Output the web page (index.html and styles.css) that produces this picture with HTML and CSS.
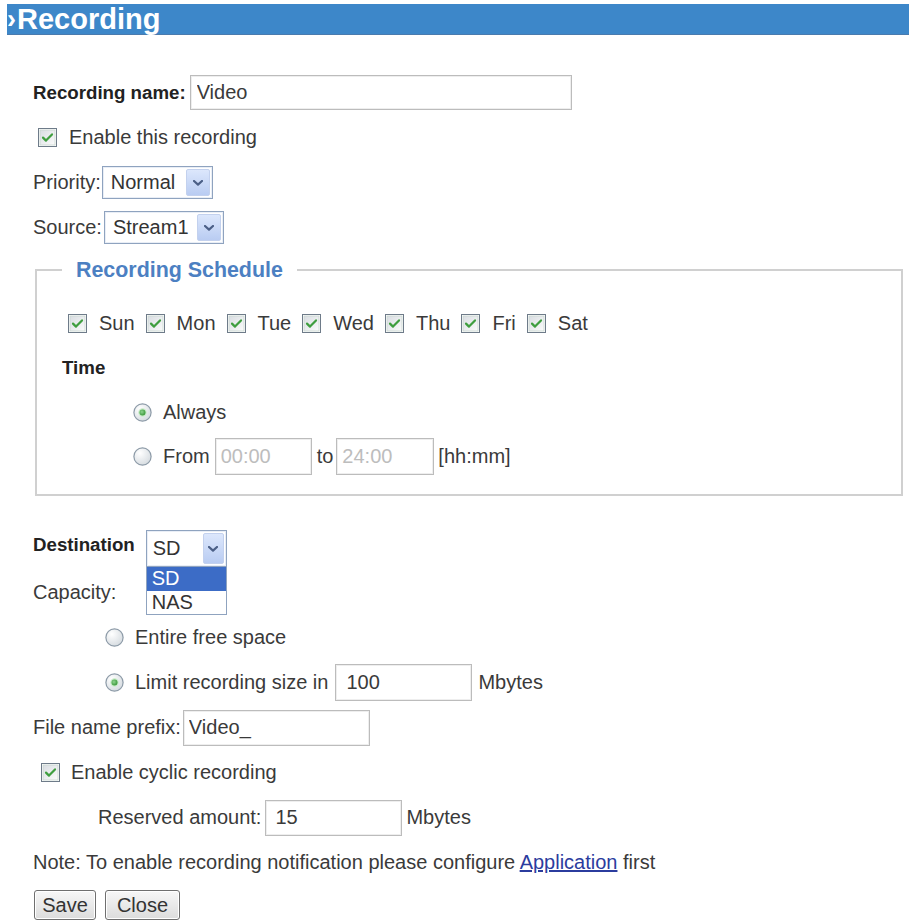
FILE: index.html
```html
<!DOCTYPE html>
<html lang="en">
<head>
<meta charset="utf-8">
<title>Recording</title>
<link rel="stylesheet" href="styles.css">
</head>
<body>
<div class="titlebar"><span class="arrow">›</span>Recording</div>

<div class="main">
  <div class="row">
    <span class="b">Recording name:</span>
    <input class="field name" type="text" value="Video">
  </div>

  <div class="row">
    <svg class="cb cb-main" viewBox="0 0 19 19"><use href="#chk"/></svg>
    <span>Enable this recording</span>
  </div>

  <div class="row">
    <span>Priority:</span>
    <div class="select sel-priority"><span class="val">Normal</span><span class="sbtn"><svg viewBox="0 0 10 6"><path d="M1 1 L5 4.6 L9 1"/></svg></span></div>
  </div>

  <div class="row">
    <span>Source:</span>
    <div class="select sel-source"><span class="val">Stream1</span><span class="sbtn"><svg viewBox="0 0 10 6"><path d="M1 1 L5 4.6 L9 1"/></svg></span></div>
  </div>

  <fieldset class="schedule">
    <legend>Recording Schedule</legend>
    <div class="row days">
      <svg class="cb cb-day" viewBox="0 0 19 19"><use href="#chk"/></svg><span class="day">Sun</span>
      <svg class="cb cb-day" viewBox="0 0 19 19"><use href="#chk"/></svg><span class="day">Mon</span>
      <svg class="cb cb-day" viewBox="0 0 19 19"><use href="#chk"/></svg><span class="day">Tue</span>
      <svg class="cb cb-day" viewBox="0 0 19 19"><use href="#chk"/></svg><span class="day">Wed</span>
      <svg class="cb cb-day" viewBox="0 0 19 19"><use href="#chk"/></svg><span class="day">Thu</span>
      <svg class="cb cb-day" viewBox="0 0 19 19"><use href="#chk"/></svg><span class="day">Fri</span>
      <svg class="cb cb-day" viewBox="0 0 19 19"><use href="#chk"/></svg><span class="day">Sat</span>
    </div>
    <div class="row"><span class="b">Time</span></div>
    <div class="row indent-time">
      <svg class="rd" viewBox="0 0 19 19"><use href="#rdon"/></svg><span>Always</span>
    </div>
    <div class="row indent-time">
      <svg class="rd" viewBox="0 0 19 19"><use href="#rdoff"/></svg><span>From</span>
      <input class="field time t-from" type="text" value="00:00" disabled>
      <span class="to">to</span>
      <input class="field time t-to" type="text" value="24:00" disabled>
      <span class="hhmm">[hh:mm]</span>
    </div>
  </fieldset>

  <div class="row dest">
    <span class="b">Destination</span>
    <div class="select sel-dest"><span class="val">SD</span><span class="sbtn"><svg viewBox="0 0 10 6"><path d="M1 1 L5 4.6 L9 1"/></svg></span>
      <ul class="options">
        <li class="hl">SD</li>
        <li>NAS</li>
      </ul>
    </div>
  </div>

  <div class="row capacity"><span>Capacity:</span></div>

  <div class="row indent-cap">
    <svg class="rd" viewBox="0 0 19 19"><use href="#rdoff"/></svg><span>Entire free space</span>
  </div>

  <div class="row indent-cap">
    <svg class="rd" viewBox="0 0 19 19"><use href="#rdon"/></svg><span>Limit recording size in</span>
    <input class="field size" type="text" value="100">
    <span class="unit">Mbytes</span>
  </div>

  <div class="row">
    <span>File name prefix:</span>
    <input class="field prefix" type="text" value="Video_">
  </div>

  <div class="row">
    <svg class="cb cb-cyclic" viewBox="0 0 19 19"><use href="#chk"/></svg>
    <span>Enable cyclic recording</span>
  </div>

  <div class="row indent-res">
    <span>Reserved amount:</span>
    <input class="field reserved" type="text" value="15">
    <span class="unit unit-res">Mbytes</span>
  </div>

  <div class="row">
    <span>Note: To enable recording notification please configure <a href="#" class="link">Application</a> first</span>
  </div>

  <div class="buttons">
    <button class="btn btn-save" type="button">Save</button>
    <button class="btn btn-close" type="button">Close</button>
  </div>
</div>

<svg class="defs" width="0" height="0" aria-hidden="true">
  <defs>
    <linearGradient id="boxg" x1="0" y1="0" x2="1" y2="1">
      <stop offset="0" stop-color="#d9dde2"/>
      <stop offset="1" stop-color="#fbfbfb"/>
    </linearGradient>
    <radialGradient id="rdg" cx="0.35" cy="0.3" r="0.8">
      <stop offset="0" stop-color="#ffffff"/>
      <stop offset="1" stop-color="#d3d9de"/>
    </radialGradient>
    <radialGradient id="dotg" cx="0.4" cy="0.4" r="0.6">
      <stop offset="0" stop-color="#8fd48f"/>
      <stop offset="1" stop-color="#3e9a3e"/>
    </radialGradient>
    <g id="chk">
      <rect x="0.5" y="0.5" width="18" height="18" fill="#fff" stroke="#6e7b89"/>
      <rect x="2" y="2" width="15" height="15" fill="url(#boxg)" stroke="#c9d6cf" stroke-width="0.8"/>
      <path d="M5 9.6 L8 12.6 L14 6.4" fill="none" stroke="#3f9e3f" stroke-width="2.2" stroke-linecap="round" stroke-linejoin="round"/>
    </g>
    <g id="rdoff">
      <circle cx="9.5" cy="9.5" r="8.6" fill="url(#rdg)" stroke="#8c9aa7" stroke-width="1.2"/>
    </g>
    <g id="rdon">
      <circle cx="9.5" cy="9.5" r="8.6" fill="url(#rdg)" stroke="#8c9aa7" stroke-width="1.2"/>
      <circle cx="9.5" cy="9.5" r="4.2" fill="#c7ebc7"/>
      <circle cx="9.5" cy="9.5" r="3" fill="url(#dotg)"/>
    </g>
  </defs>
</svg>
</body>
</html>
```

FILE: styles.css
```css
* {
  box-sizing: border-box;
}

body {
  margin: 0;
  background: #ffffff;
  color: #3a3a3a;
  font-family: "Liberation Sans", Arial, Helvetica, sans-serif;
  font-size: 20px;
}

.defs {
  position: absolute;
  width: 0;
  height: 0;
  overflow: hidden;
}

.titlebar {
  margin: 4px 0 0 7px;
  height: 31px;
  background: #3d87c9;
  border-bottom: 1px solid #4a7bae;
  color: #ffffff;
  font-weight: bold;
  font-size: 29px;
  line-height: 31px;
  display: flex;
  align-items: center;
  white-space: nowrap;
}

.titlebar .arrow {
  font-size: 27px;
  margin-right: 1px;
}

.main {
  padding: 35px 0 0 33px;
}

.row {
  height: 45px;
  display: flex;
  align-items: center;
  white-space: nowrap;
}

.b {
  font-weight: bold;
  color: #222222;
  font-size: 18.7px;
}

/* text inputs */
.field {
  margin: 0;
  font-family: inherit;
  font-size: 20px;
  color: #3a3a3a;
  background: #ffffff;
  border: 1px solid #bcbcbc;
  box-shadow: inset 0 0 0 1px #eeeeee;
  padding: 0 0 0 8px;
  outline: none;
}

.field:disabled {
  color: #bdbdbd;
  background: #ffffff;
}

.name {
  margin-left: 4px;
  width: 382px;
  height: 35px;
  padding-left: 6px;
}

.time {
  height: 37px;
  width: 97px;
  padding-left: 5px;
}

.t-from {
  margin-left: 5px;
}

.t-to {
  margin-left: 3px;
  width: 98px;
}

.to {
  margin-left: 5px;
}

.hhmm {
  margin-left: 4px;
}

.size {
  margin-left: 7px;
  width: 137px;
  height: 37px;
  padding-left: 10px;
}

.prefix {
  margin-left: 2px;
  width: 187px;
  height: 36px;
  padding-left: 5px;
}

.reserved {
  margin-left: 4px;
  width: 137px;
  height: 36px;
  padding-left: 9px;
}

.unit {
  margin-left: 6px;
}

.unit-res {
  margin-left: 4px;
}

/* checkboxes and radios */
.cb {
  width: 19px;
  height: 19px;
  flex: none;
}

.cb-main {
  margin: 0 12px 0 5px;
}

.cb-cyclic {
  margin: 0 11px 0 8px;
}

.cb-day {
  margin: 0 12px 0 0;
}

.cb-day:first-child {
  margin-left: 6px;
}

.day {
  margin-right: 11px;
}

.rd {
  width: 19px;
  height: 19px;
  flex: none;
  margin-right: 11px;
}

.indent-time {
  padding-left: 71px;
}

.indent-cap {
  padding-left: 72px;
}

.indent-res {
  padding-left: 65px;
}

/* selects */
.select {
  position: relative;
  display: flex;
  align-items: center;
  justify-content: space-between;
  background: #ffffff;
  border: 1px solid #8fa3bf;
  box-shadow: inset 0 0 0 1px #e9eef6;
  padding: 2px 2px 2px 8px;
  color: #333333;
}

.sel-priority {
  margin-left: 1px;
  width: 111px;
  height: 33px;
}

.sel-source {
  margin-left: 2px;
  width: 120px;
  height: 33px;
}

.sel-dest {
  margin: 8px 0 0 11px;
  width: 81px;
  height: 37px;
  padding-left: 6px;
}

.sbtn {
  width: 24px;
  height: 100%;
  flex: none;
  display: flex;
  align-items: center;
  justify-content: center;
  background: linear-gradient(#dce7fc, #b9ccf2);
  border: 1px solid #c3d1ee;
  border-radius: 2px;
}

.sel-dest .sbtn {
  width: 21px;
}

.sbtn svg {
  width: 10px;
  height: 6px;
  fill: none;
  stroke: #4b5f86;
  stroke-width: 2.2;
  stroke-linecap: round;
  stroke-linejoin: round;
}

.options {
  position: absolute;
  left: -1px;
  top: 100%;
  width: 81px;
  margin: 0;
  padding: 0;
  list-style: none;
  background: #ffffff;
  border: 1px solid #8fa3bf;
  z-index: 2;
}

.options li {
  height: 23.5px;
  line-height: 23.5px;
  padding-left: 5px;
  color: #333333;
}

.options li.hl {
  background: #3c6cc6;
  color: #ffffff;
}

/* fieldset */
.schedule {
  margin: 9px 0 0 2px;
  width: 868px;
  border: 2px solid #d0d0d0;
  padding: 20px 0 15px 25px;
  min-width: 0;
}

.schedule legend {
  padding: 0 14px;
  color: #4c80c2;
  font-weight: bold;
  font-size: 21.4px;
  line-height: 22px;
}

.schedule .row {
  height: 44.5px;
}

.dest {
  margin-top: 26px;
}

.capacity {
  margin-top: 3px;
}

.link {
  color: #2b3c9e;
  text-decoration: underline;
}

/* buttons */
.buttons {
  display: flex;
  gap: 9px;
  margin: 5px 0 0 1px;
}

.btn {
  height: 30px;
  font-family: inherit;
  font-size: 20px;
  color: #333333;
  background: linear-gradient(#f7f7f7, #dcdcdc);
  border: 1px solid #6f6f6f;
  border-radius: 3px;
  box-shadow: inset 0 0 0 1px #ffffff;
  padding: 0;
  text-align: center;
}

.btn-save {
  width: 62px;
}

.btn-close {
  width: 75px;
}
```
